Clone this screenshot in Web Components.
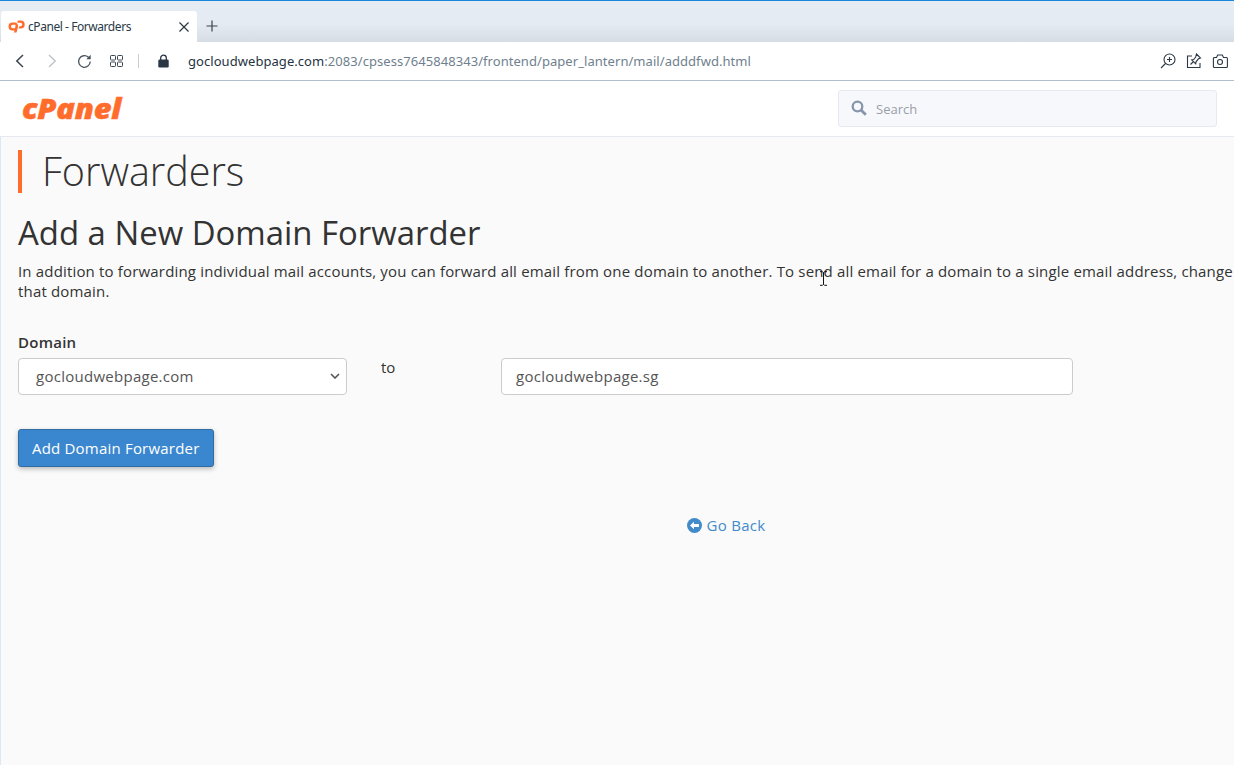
<!DOCTYPE html>
<html lang="en"><head><meta charset="utf-8"><title>cPanel - Forwarders</title>
<style>
html,body{margin:0;padding:0;height:100%;overflow:hidden;background:#fafafa}
body{font-family:"Open Sans","Liberation Sans",sans-serif;width:1234px;height:765px}
browser-chrome{width:1234px}
</style></head><body>
<browser-chrome></browser-chrome>
<cp-header></cp-header>
<cp-page></cp-page>
<template id="t-chrome">
<style>
:host{display:block;height:81px;box-sizing:border-box;font-family:"Open Sans",sans-serif;border-top:1px solid #1a86dc}
.strip{height:41px;box-sizing:border-box;padding:10px 0 0 1px;display:flex;align-items:stretch;background:linear-gradient(#e6ecf4 0,#e4ebf3 55%,#d7dde4 100%)}
.tab{width:196px;background:#fff;border-radius:3px 3px 0 0;display:flex;align-items:center;box-sizing:border-box;padding:0 7px 0 7px;font-size:12px;color:#2b3a48;white-space:nowrap;font-family:"Noto Sans","Open Sans",sans-serif}
.tab svg.fav{margin-right:3px;flex:none}
.tab span{flex:1;letter-spacing:-.44px}
.plus{margin:9px 0 0 9px}
.bar{height:39px;box-sizing:border-box;background:#fff;border-bottom:1px solid #b0bfcb;display:flex;align-items:center;padding-left:15px}
.bar svg{flex:none;display:block}
.sep{width:1px;height:14px;background:#c6ccd2;margin:0 19px 0 15px}
.url{margin-left:19px;font-size:13px;color:#26333f;white-space:nowrap;font-family:"Noto Sans","Open Sans",sans-serif;letter-spacing:.055px}
.url i{font-style:normal;color:#6f7f8e}
.tools{margin-left:auto;display:flex;gap:10px;padding-right:6px}
</style>
<div class="strip">
<div class="tab">
<svg class="fav" width="17" height="13" viewBox="0 0 17 13"><path d="M6.500 2.500H4.500a4 4 0 0 0 0 8h2l1-2.300H4.700a1.700 1.700 0 0 1 0-3.400h2c.8 0 1 .6.800 1.300L6 12.500h2.500L10 7C10.500 4.300 8.900 2.500 6.500 2.500zM9.800.5h2.900a4 4 0 0 1 0 8h-2l.6-2.300h1.200a1.700 1.700 0 0 0 0-3.400H9.200z" fill="#ff6c2c"/></svg>
<span>cPanel - Forwarders</span>
<svg width="12" height="12" viewBox="0 0 12 12"><path d="M1.500 1.500l9 9M10.500 1.500l-9 9" stroke="#2c3640" stroke-width="1.200" fill="none"/></svg>
</div>
<svg class="plus" width="12" height="12" viewBox="0 0 12 12"><path d="M6 .5v11M.5 6h11" stroke="#3a444e" stroke-width="1.200" fill="none"/></svg>
</div>
<div class="bar">
<svg width="10" height="14" viewBox="0 0 10 14"><path d="M8 1L1.800 7 8 13" stroke="#3a4550" stroke-width="1.500" fill="none"/></svg>
<svg style="margin-left:22px" width="10" height="14" viewBox="0 0 10 14"><path d="M2 1l6.200 6L2 13" stroke="#b9c0c7" stroke-width="1.300" fill="none"/></svg>
<svg style="margin-left:20px" width="15" height="15" viewBox="0 0 15 15"><path d="M13.200 7.500a5.800 5.800 0 1 1-1.800-4.200L13 4.800" stroke="#4a545e" stroke-width="1.300" fill="none"/><path d="M13.700 .8v4.500H9.300z" fill="#4a545e"/></svg>
<svg style="margin-left:18px" width="13" height="12" viewBox="0 0 13 12"><g fill="none" stroke="#3a4550" stroke-width="1"><rect x=".5" y=".5" width="5" height="4.500" rx=".8"/><rect x="7.500" y=".5" width="5" height="4.500" rx=".8"/><rect x=".5" y="7" width="5" height="4.500" rx=".8"/><rect x="7.500" y="7" width="5" height="4.500" rx=".8"/></g></svg>
<div class="sep"></div>
<svg width="11" height="14" viewBox="0 0 11 14"><path d="M2.700 6V4a2.800 2.800 0 0 1 5.600 0v2" stroke="#2b3745" stroke-width="1.300" fill="none"/><rect x=".3" y="5.500" width="10.400" height="8" rx="1.300" fill="#2b3745"/></svg>
<div class="url">gocloudwebpage.com<i>:2083/cpsess7645848343/frontend/paper_lantern/mail/adddfwd.html</i></div>
<div class="tools">
<svg width="16" height="16" viewBox="0 0 16 16"><g fill="none" stroke="#2c3844" stroke-width="1.100"><circle cx="9.500" cy="6.500" r="5.500"/><path d="M5.500 10.500L1 15M9.500 4v5M7 6.500h5"/></g></svg>
<svg width="16" height="16" viewBox="0 0 16 16"><g fill="none" stroke="#2c3844" stroke-width="1.100"><path d="M6 3H1.500v11.500H14V10"/><path d="M10.500 1l4 4-2 .8-2.500 3-.3 2-4-4 2-.3 2-2.500zM7.500 8.500l-3 3"/></g></svg>
<svg width="16" height="16" viewBox="0 0 16 16"><g fill="none" stroke="#2c3844" stroke-width="1.100"><path d="M1.500 4.500h3l1.200-2.500h4.600l1.200 2.500h3a1 1 0 0 1 .9 1v8a1 1 0 0 1-1 1h-12a1 1 0 0 1-1-1v-8a1 1 0 0 1 1-1z"/><circle cx="8" cy="9" r="2.500"/></g></svg>
</div>
</div>
</template>
<template id="t-header">
<style>
:host{display:flex;align-items:center;height:56px;box-sizing:border-box;background:#fff;border-bottom:1px solid #e6e9f2;padding:0 17px 0 22px;justify-content:space-between}
.logo{font:italic 800 28px/1 "Open Sans",sans-serif;color:#ff6c2c;letter-spacing:-.2px;-webkit-text-stroke:.5px #ff6c2c;margin-top:-1px;transform:scaleX(1.1);transform-origin:0 50%}
.search{width:379px;height:37px;box-sizing:border-box;background:#f7f8fc;border:1px solid #e6e9f2;border-radius:3px;display:flex;align-items:center;padding-left:12px;margin-top:-1px;font-size:13px;color:#9a9ea6}
.search svg{margin-right:9px}
.search span{padding-top:1px}
</style>
<div class="logo">cPanel</div>
<div class="search"><svg width="16" height="16" viewBox="0 0 16 16"><circle cx="6.500" cy="6.500" r="4.800" fill="none" stroke="#8795ab" stroke-width="2.300"/><path d="M10 10l4.800 4.800" stroke="#8795ab" stroke-width="2.800"/></svg><span>Search</span></div>
</template>
<template id="t-page">
<style>
:host{display:block;height:628px;box-sizing:border-box;padding:13px 0 0 18px;background:#fafafa;color:#333;font-family:"Open Sans",sans-serif;position:relative;overflow:hidden}
:host::before{content:"";position:absolute;left:0;top:0;bottom:0;width:1px;background:#dfe7f5}
h1{margin:0;height:43px;box-sizing:border-box;border-left:4px solid #ff6c2c;padding-left:20px;font-weight:300;font-size:39.500px;line-height:43px;color:#333;white-space:nowrap}
h2{margin:18px 0 0;font-weight:400;font-size:32.900px;line-height:44px;color:#333;white-space:nowrap}
p{margin:6px 0 0;font-size:15px;line-height:20px;white-space:nowrap;letter-spacing:.17px}
.form{display:flex;align-items:flex-start;margin-top:31px}
.col1{width:329px}
label{display:block;font-weight:600;font-size:15px;line-height:20px;margin-bottom:6px;letter-spacing:.25px}
.box{height:37px;box-sizing:border-box;background:#fff;border:1px solid #ccc;border-radius:4px;display:flex;align-items:center;font-size:15px;color:#555;white-space:nowrap;letter-spacing:.27px;padding-bottom:1px}
.sel{padding:0 6px 1px 17px;justify-content:space-between}
.to{width:154px;padding:0 0 0 34px;margin-top:25px;box-sizing:border-box;font-size:15px;line-height:20px}
.inp{width:572px;padding-left:14px;margin-top:26px}
.btn{display:inline-flex;align-items:center;height:38px;margin-top:34px;box-sizing:border-box;padding:0 14px 0 13px;background:#3a87cf;border:1px solid #2e6da4;border-radius:3px;color:#fff;font-size:15px;box-shadow:0 2px 5px rgba(0,0,0,.26);letter-spacing:.2px}
.back{display:flex;align-items:center;justify-content:center;gap:4px;margin:48px 0 0 0;width:1417px;color:#428bca;font-size:15px;line-height:20px;letter-spacing:.3px}
.cursor{position:absolute;left:819px;top:134px}
</style>
<h1>Forwarders</h1>
<h2>Add a New Domain Forwarder</h2>
<p>In addition to forwarding individual mail accounts, you can forward all email from one domain to another. To send all email for a domain to a single email address, change<br>that domain.</p>
<div class="form">
<div class="col1"><label>Domain</label><div class="box sel"><span>gocloudwebpage.com</span><svg width="10" height="6" viewBox="0 0 10 6"><path d="M1 1l4 4 4-4" stroke="#555" stroke-width="1.600" fill="none"/></svg></div></div>
<div class="to">to</div>
<div class="box inp">gocloudwebpage.sg</div>
</div>
<div class="btn">Add Domain Forwarder</div>
<div class="back"><svg width="15" height="15" viewBox="0 0 15 15"><circle cx="7.500" cy="7.500" r="7.500" fill="#428bca"/><path d="M3 7.500l4-3.800v2.300h5v3H7v2.300z" fill="#fff"/></svg><span>Go Back</span></div>
<svg class="cursor" width="9" height="15" viewBox="0 0 9 15"><path d="M1 .7h2.500l1 1 1-1H8M4.500 1.500v12M1 14.300h2.500l1-1 1 1H8" fill="none" stroke="#111" stroke-width="1"/></svg>
</template>
<script>
function def(name,id){customElements.define(name,class extends HTMLElement{constructor(){super();this.attachShadow({mode:"open"}).appendChild(document.getElementById(id).content.cloneNode(true));}});}
def("browser-chrome","t-chrome");def("cp-header","t-header");def("cp-page","t-page");
</script>
</body></html>
